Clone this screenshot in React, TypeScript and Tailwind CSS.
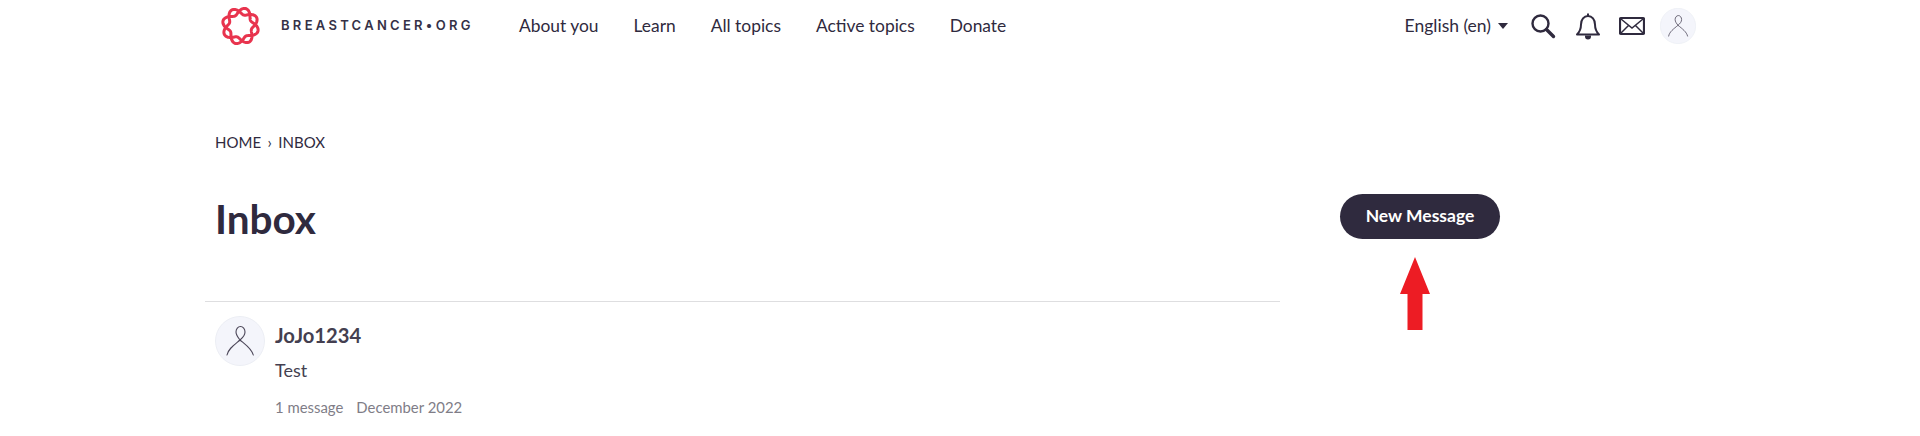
const navItems = ["About you", "Learn", "All topics", "Active topics", "Donate"];

function Logo() {
  // two wavy strands twisted round a ring
  const points = (phase: number) => {
    let d = "";
    for (let i = 0; i <= 180; i++) {
      const a = (i / 180) * Math.PI * 2;
      const r = 14.8 + 3.4 * Math.sin(4 * a + phase);
      const x = 20 + r * Math.cos(a);
      const y = 20 + r * Math.sin(a);
      d += `${i === 0 ? "M" : "L"}${x.toFixed(2)} ${y.toFixed(2)} `;
    }
    return d + "Z";
  };
  return (
    <svg width="41" height="40" viewBox="0 0 40 40" fill="none" className="shrink-0">
      <path d={points(0.4)} stroke="#e8344e" strokeWidth="3" />
      <path d={points(0.4 + Math.PI)} stroke="#e8344e" strokeWidth="3" />
    </svg>
  );
}

function Avatar({ size }: { size: number }) {
  return (
    <svg width={size} height={size} viewBox="0 0 50 50" fill="none" className="block">
      <circle cx="25" cy="25" r="24.5" fill="#f4f5fb" stroke="#eceef4" />
      <path
        d="M12 39c1-6 7-10 13-15 3-2.5 5-5 5-8 0-3-2-5.500-4.500-5.500S21 13 21 16c0 3 2 5.500 4 8 6 5 12 9 13.300 15"
        stroke="#4b4658"
        strokeWidth="1.1"
        strokeLinecap="round"
      />
    </svg>
  );
}

export default function App() {
  return (
    <div className="relative h-[436px] overflow-hidden bg-white font-['Lato','Open_Sans',sans-serif] text-[#2f2a3e]">
      <header className="flex h-[52px] items-center pl-[220px] pr-[224px]">
        <Logo />
        <span className="ml-[20px] w-[189px] whitespace-nowrap font-['Inter',sans-serif] text-[13px] font-semibold tracking-[0.253em] text-[#353147]">
          BREASTCANCER•ORG
        </span>
        <nav className="ml-[49px] flex gap-[35px] text-[17.4px] text-[#2f2a3e]">
          {navItems.map((item) => (
            <span key={item}>{item}</span>
          ))}
        </nav>
        <div className="ml-auto flex items-center">
          <span className="text-[17.5px]">English (en)</span>
          <span className="ml-[7px] h-0 w-0 border-x-[5px] border-t-[6px] border-x-transparent border-t-[#2f2a3e]" />
          <svg width="26" height="26" viewBox="0 0 26 26" fill="none" className="ml-[22px]" stroke="#2f2a3e">
            <circle cx="10.5" cy="10.5" r="8" strokeWidth="2.4" />
            <path d="M16.5 16.5l7 7" strokeWidth="3.4" strokeLinecap="round" />
          </svg>
          <svg width="26" height="28" viewBox="0 0 26 28" fill="none" className="ml-[19px]" stroke="#2f2a3e" strokeWidth="2">
            <path d="M2 22.5c3-3 4-5 4-10 0-5 3-8.500 7-8.500s7 3.500 7 8.500c0 5 1 7 4 10z" strokeLinejoin="round" />
            <path d="M13 1.5V4" />
            <path d="M11 24.5a2 2 0 0 0 4 0z" fill="#2f2a3e" />
          </svg>
          <svg width="26" height="22" viewBox="0 0 26 22" fill="none" className="ml-[18px]" stroke="#2f2a3e">
            <rect x="1" y="3" width="24" height="16" rx="1" strokeWidth="2.2" />
            <path d="M2 4l11 9 11-9M2 18l8-8M24 18l-8-8" strokeWidth="1.5" />
          </svg>
          <div className="ml-[15px]">
            <Avatar size={36} />
          </div>
        </div>
      </header>

      <main className="flex">
        <section className="ml-[205px] w-[1075px]">
          <div className="mt-[80px] flex gap-[6.5px] pl-[10px] text-[15px] leading-5 text-[#2f2a3e]">
            <span>HOME</span>
            <span>›</span>
            <span>INBOX</span>
          </div>
          <div className="flex h-[149px] items-start">
            <h1 className="ml-[10px] mt-[42px] text-[40.5px] font-bold leading-[50px] text-[#2f2a3e]">Inbox</h1>
          </div>
          <div className="flex gap-[10px] border-t border-[#dedee0] pl-[10px] pt-[14px]">
            <Avatar size={50} />
            <div>
              <div className="pt-[5px] text-[20.2px] font-bold leading-7 text-[#443f50]">JoJo1234</div>
              <div className="mt-[9px] text-[18px] leading-6 text-[#443f50]">Test</div>
              <div className="mt-[15px] flex gap-[13px] text-[14.9px] leading-5 text-[#807d87]">
                <span>1 message</span>
                <span>December 2022</span>
              </div>
            </div>
          </div>
        </section>
        <div className="ml-[60px] mt-[142px]">
          <button className="h-[45px] w-[160px] rounded-full bg-[#2f2a3e] text-[17.5px] font-bold text-white">
            New Message
          </button>
        </div>
      </main>

      {/* red annotation arrow drawn over the page */}
      <svg width="30" height="73" viewBox="0 0 30 73" className="absolute left-[1400px] top-[257px]">
        <path d="M15 0 30 37H22.5V73H7.5V37H0z" fill="#ed1c24" />
      </svg>
    </div>
  );
}
